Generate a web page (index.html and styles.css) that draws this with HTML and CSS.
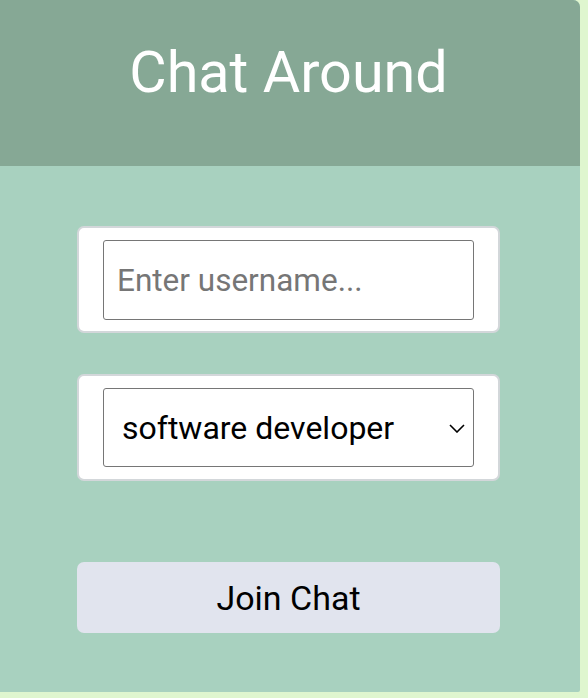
FILE: index.html
```html
<!DOCTYPE html>
<html lang="en">
<head>
<meta charset="utf-8">
<title>Chat Around</title>
<link rel="stylesheet" href="styles.css">
</head>
<body>
<div class="card">
  <header class="card-header">
    <h1 class="title">Chat Around</h1>
  </header>
  <main class="card-body">
    <div class="field-box">
      <input class="text-input" type="text" placeholder="Enter username...">
    </div>
    <div class="field-box field-box-select">
      <div class="select-wrap">
        <select class="select-input">
          <option>software developer</option>
          <option>designer</option>
          <option>product manager</option>
        </select>
        <svg class="chevron" width="16" height="9" viewBox="0 0 16 9" aria-hidden="true">
          <path d="M1 1 L8 8 L15 1" fill="none" stroke="#000" stroke-width="1.6"/>
        </svg>
      </div>
    </div>
    <button class="join-btn" type="button">Join Chat</button>
  </main>
</div>
</body>
</html>
```

FILE: styles.css
```css
* { box-sizing: border-box; }

html, body {
  margin: 0;
  padding: 0;
}

body {
  background: #dff6cf;
  width: 588px;
  height: 698px;
  font-family: Roboto, "Liberation Sans", sans-serif;
  overflow: hidden;
}

.card {
  width: 580px;
  height: 692px;
  background: #a8d1bf;
  border-radius: 0 7px 2px 0;
  overflow: hidden;
  display: flex;
  flex-direction: column;
}

.card-header {
  height: 166px;
  background: #86a895;
  display: flex;
  justify-content: center;
  padding-top: 36px;
  padding-right: 3px;
}

.title {
  margin: 0;
  color: #ffffff;
  font-weight: 400;
  font-size: 57.5px;
  line-height: 74px;
  height: 74px;
}

.card-body {
  display: flex;
  flex-direction: column;
  align-items: center;
  padding-top: 60px;
  padding-right: 3px;
}

.field-box {
  width: 423px;
  background: #ffffff;
  border: 2px solid #d3d7da;
  border-radius: 7px;
  padding: 12px 24px 11px 24px;
  margin-bottom: 41px;
}

.field-box-select {
  padding: 12px 24px 12px 24px;
  margin-bottom: 81px;
}

.text-input {
  display: block;
  width: 371px;
  height: 80px;
  border: 1.5px solid #767676;
  border-radius: 3px;
  padding: 0 0 0 13px;
  font-family: Roboto, "Liberation Sans", sans-serif;
  font-size: 31.5px;
  color: #000;
  background: #fff;
  outline: none;
}

.text-input::placeholder {
  color: #767676;
}

.select-wrap {
  position: relative;
  width: 371px;
  height: 79px;
}

.select-input {
  display: block;
  width: 100%;
  height: 79px;
  -webkit-appearance: none;
  appearance: none;
  border: 1.5px solid #767676;
  border-radius: 3px;
  padding: 0 0 0 18px;
  font-family: Roboto, "Liberation Sans", sans-serif;
  font-size: 32px;
  color: #000;
  background: #fff;
  outline: none;
}

.chevron {
  position: absolute;
  right: 9px;
  top: 36px;
  pointer-events: none;
}

.join-btn {
  width: 423px;
  height: 71px;
  border: none;
  border-radius: 7px;
  background: #e1e4ee;
  font-family: Roboto, "Liberation Sans", sans-serif;
  font-size: 34px;
  color: #000;
  padding: 0;
  cursor: pointer;
}
```
